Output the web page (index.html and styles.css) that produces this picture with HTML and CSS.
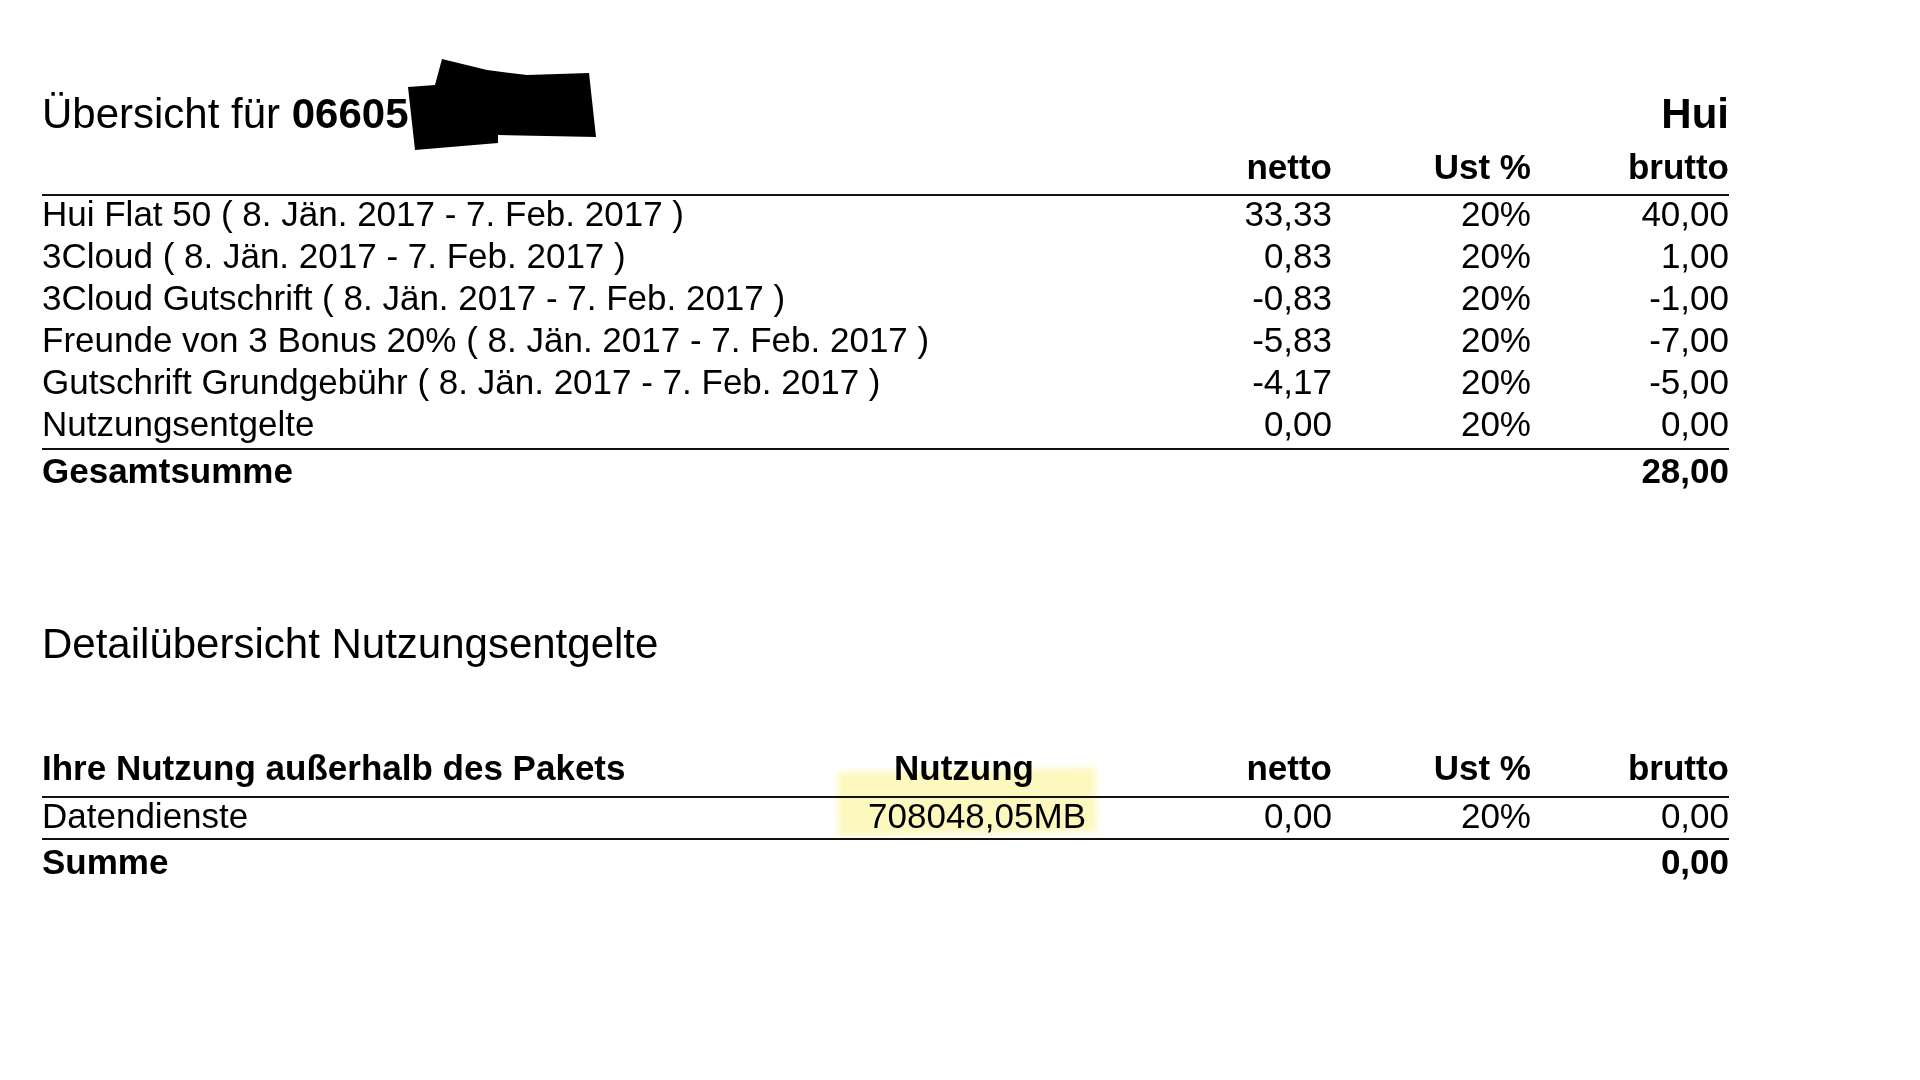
FILE: index.html
```html
<!DOCTYPE html>
<html lang="de">
<head>
  <meta charset="UTF-8">
  <title>Übersicht</title>
  <link rel="stylesheet" href="styles.css">
</head>
<body>
  <div class="page">
    <div class="title-row">
      <div class="title">Übersicht für <b>06605</b></div>
      <div class="brand">Hui</div>
    </div>

    <!-- Schwärzung der Rufnummer -->
    <svg class="redact" width="190" height="95" viewBox="0 0 190 95">
      <polygon points="34,2 79,13 119,18 181,16 188,80 90,78 90,86 7,93 0,30 27,28" fill="#000"/>
    </svg>

    <div class="bill">
      <div class="row head">
        <span></span>
        <span class="num">netto</span>
        <span class="num">Ust %</span>
        <span class="num">brutto</span>
      </div>
      <div class="row">
        <span>Hui Flat 50 ( 8. Jän. 2017 - 7. Feb. 2017 )</span>
        <span class="num">33,33</span><span class="num">20%</span><span class="num">40,00</span>
      </div>
      <div class="row">
        <span>3Cloud ( 8. Jän. 2017 - 7. Feb. 2017 )</span>
        <span class="num">0,83</span><span class="num">20%</span><span class="num">1,00</span>
      </div>
      <div class="row">
        <span>3Cloud Gutschrift ( 8. Jän. 2017 - 7. Feb. 2017 )</span>
        <span class="num">-0,83</span><span class="num">20%</span><span class="num">-1,00</span>
      </div>
      <div class="row">
        <span>Freunde von 3 Bonus 20% ( 8. Jän. 2017 - 7. Feb. 2017 )</span>
        <span class="num">-5,83</span><span class="num">20%</span><span class="num">-7,00</span>
      </div>
      <div class="row">
        <span>Gutschrift Grundgebühr ( 8. Jän. 2017 - 7. Feb. 2017 )</span>
        <span class="num">-4,17</span><span class="num">20%</span><span class="num">-5,00</span>
      </div>
      <div class="row">
        <span>Nutzungsentgelte</span>
        <span class="num">0,00</span><span class="num">20%</span><span class="num">0,00</span>
      </div>
      <div class="row total">
        <span>Gesamtsumme</span>
        <span></span><span></span><span class="num">28,00</span>
      </div>
    </div>

    <div class="section-title">Detailübersicht Nutzungsentgelte</div>

    <div class="bill detail">
      <div class="row head">
        <span>Ihre Nutzung außerhalb des Pakets</span>
        <span class="center">Nutzung</span>
        <span class="num">netto</span>
        <span class="num">Ust %</span>
        <span class="num">brutto</span>
      </div>
      <div class="row">
        <span>Datendienste</span>
        <span class="num">708048,05MB</span>
        <span class="num">0,00</span><span class="num">20%</span><span class="num">0,00</span>
      </div>
      <div class="row total">
        <span>Summe</span>
        <span></span><span></span><span></span><span class="num">0,00</span>
      </div>
      <span class="marker"></span>
    </div>
  </div>
</body>
</html>
```

FILE: styles.css
```css
body {
  margin: 0;
  background: #fff;
  color: #000;
  font-family: "Liberation Sans", Arial, sans-serif;
}
.page {
  position: relative;
  width: 1687px;
  margin-left: 42px;
  padding-top: 90px;
}
.title-row {
  display: flex;
  justify-content: space-between;
  align-items: baseline;
  font-size: 42px;
  line-height: 48px;
}
.brand {
  font-weight: bold;
}
.redact {
  position: absolute;
  left: 366px;
  top: 57px;
}
.bill {
  margin-top: 11px;
  font-size: 35px;
}
.row {
  display: grid;
  grid-template-columns: 1fr 200px 199px 198px;
  line-height: 36px;
  padding-bottom: 6px;
  white-space: nowrap;
}
.row.head {
  font-weight: bold;
  padding-bottom: 9px;
  border-bottom: 2px solid #111;
}
.row.total {
  font-weight: bold;
  padding-top: 3px;
  padding-bottom: 0;
  border-top: 2px solid #111;
}
.num {
  text-align: right;
}
.center {
  text-align: center;
}
.section-title {
  margin-top: 131px;
  font-size: 42px;
  line-height: 48px;
}
.detail {
  position: relative;
  margin-top: 82px;
}
.detail .row {
  grid-template-columns: 1fr 244px 246px 199px 198px;
  padding-bottom: 4px;
}
.detail .row.head {
  padding-bottom: 10px;
}
.detail .row.total {
  padding-top: 4px;
  padding-bottom: 0;
}
.marker {
  position: absolute;
  left: 796px;
  top: 20px;
  width: 258px;
  height: 64px;
  background: rgba(250, 238, 100, 0.42);
  mix-blend-mode: multiply;
  filter: blur(3px);
  transform: rotate(-1deg);
}
```
